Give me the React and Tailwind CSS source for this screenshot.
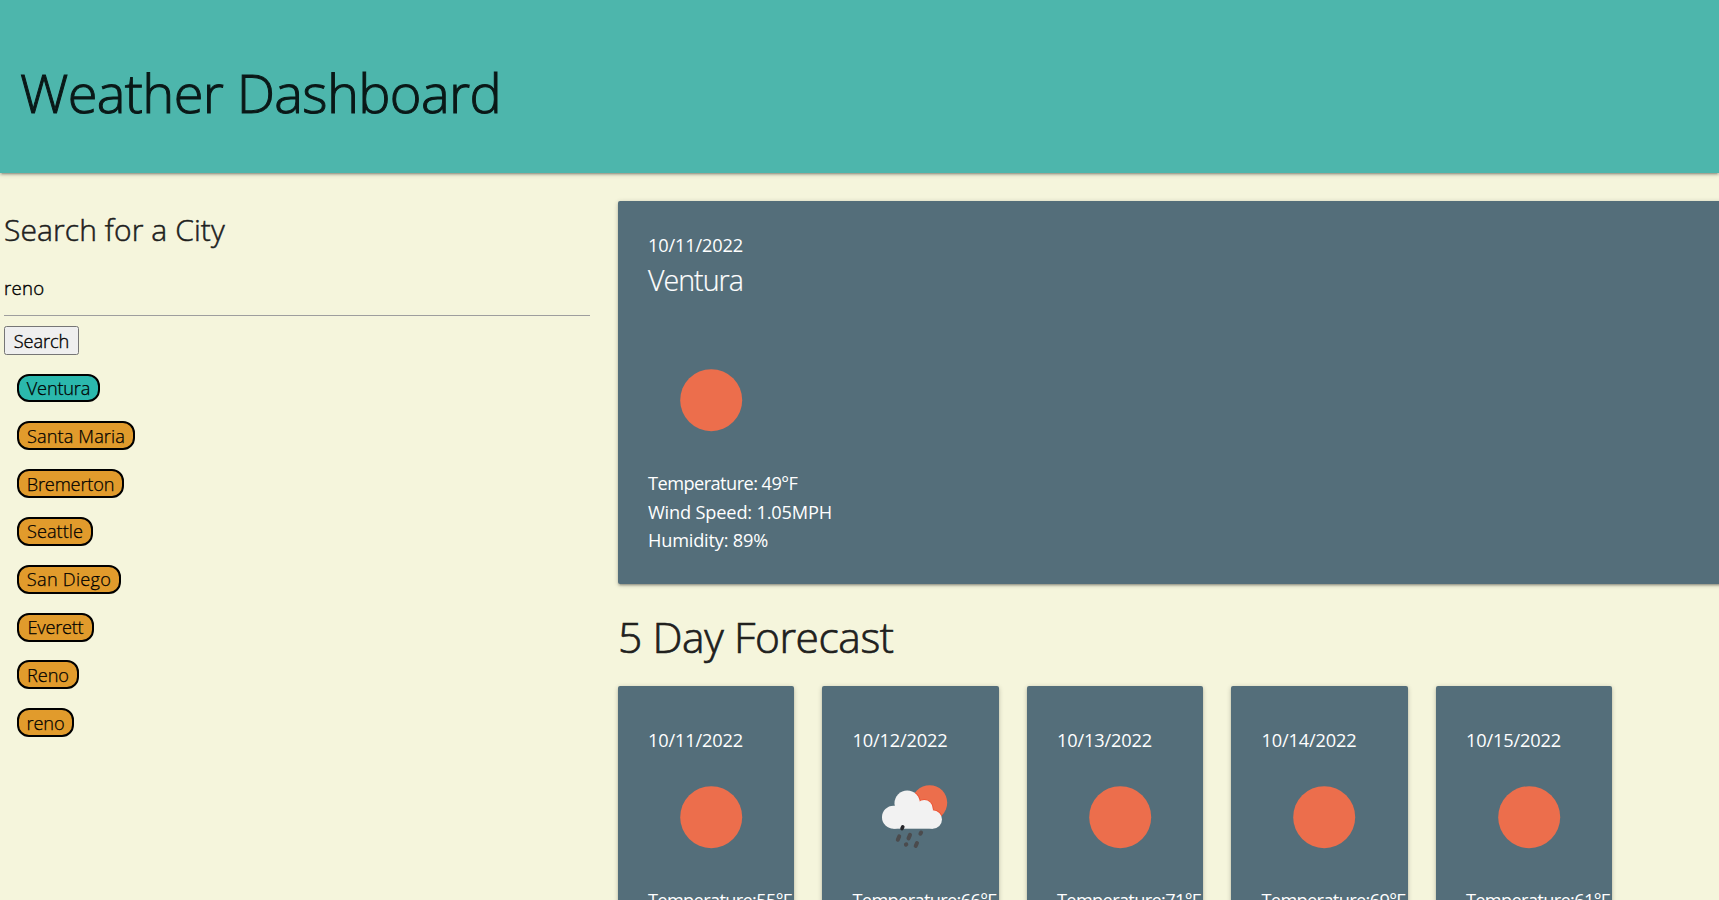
const CITIES = [
  { name: "Ventura", style: "w-[83px] bg-[#2bb8ad] tracking-[-0.2px]" },
  { name: "Santa Maria", style: "w-[118px] bg-[#e19b2c] tracking-[0.1px]" },
  { name: "Bremerton", style: "w-[107px] bg-[#e19b2c] tracking-[-0.15px]" },
  { name: "Seattle", style: "w-[76px] bg-[#e19b2c] tracking-[0px]" },
  { name: "San Diego", style: "w-[104px] bg-[#e19b2c] tracking-[0.25px]" },
  { name: "Everett", style: "w-[77px] bg-[#e19b2c] tracking-[-0.25px]" },
  { name: "Reno", style: "w-[62px] bg-[#e19b2c] tracking-[-0.1px]" },
  { name: "reno", style: "w-[57px] bg-[#e19b2c] tracking-[-0.1px]" },
];

const FORECAST = [
  { date: "10/11/2022", temp: 55 },
  { date: "10/12/2022", temp: 66, rain: true },
  { date: "10/13/2022", temp: 71 },
  { date: "10/14/2022", temp: 69 },
  { date: "10/15/2022", temp: 61 },
];

const CARD =
  "rounded-[2px] bg-[#546e7a] text-white text-[18.2px] leading-[28.6px] shadow-[0_2px_2px_0_rgba(0,0,0,0.14),0_3px_1px_-2px_rgba(0,0,0,0.12),0_1px_5px_0_rgba(0,0,0,0.2)]";

function SunIcon() {
  return (
    <svg className="block size-[126px]" viewBox="0 0 126 126">
      <circle cx="63.2" cy="63.2" r="31" fill="#ec6e4c" />
    </svg>
  );
}

function RainIcon() {
  const cloud = (
    <>
      <circle cx="72.3" cy="54.5" r="8.4" />
      <circle cx="80.8" cy="65.5" r="9.2" />
      <circle cx="55.2" cy="49.2" r="12.7" />
    </>
  );
  return (
    <svg className="block size-[126px]" viewBox="0 0 126 126">
      <defs>
        <clipPath id="sun-disc">
          <circle cx="77.6" cy="48.8" r="17.6" />
        </clipPath>
      </defs>
      <circle cx="77.6" cy="48.8" r="17.6" fill="#ec6e4c" />
      <g clipPath="url(#sun-disc)" fill="none" stroke="#ee5030" strokeWidth="1.8">
        {cloud}
      </g>
      <g fill="#f2f2f2">
        {cloud}
        <circle cx="41.5" cy="63.2" r="11.5" />
        <rect x="41.5" y="55" width="39.3" height="19.7" />
      </g>
      <g stroke="#4b4b4d" strokeWidth="4" strokeLinecap="round">
        <path d="M50.8 72.8L50 74.6" stroke="#26262a" strokeWidth="3.6" />
        <path d="M47.2 82.4L45.8 85.8M58 80.9L56.5 84.4M69.1 78.5L68.4 79.7M53.9 90.6L54.3 90.4M65 89L63.7 92" />
      </g>
    </svg>
  );
}

export default function App() {
  return (
    <div className="flex h-[900px] w-full flex-col overflow-hidden bg-[#f5f5dc] font-['Open_Sans','Noto_Sans',sans-serif] text-black">
      <header className="h-[173px] shrink-0 bg-[#4db6ac] pt-[55px] pl-[20px] shadow-[0_2px_2px_0_rgba(0,0,0,0.14),0_3px_1px_-2px_rgba(0,0,0,0.12),0_1px_5px_0_rgba(0,0,0,0.2)]">
        <h1 className="text-[54.2px] leading-[74px] font-light tracking-[-0.65px] whitespace-nowrap text-[#0a1817] [-webkit-text-stroke:1px_#0a1817]">
          Weather Dashboard
        </h1>
      </header>

      <main className="flex min-h-0 flex-1">
        <aside className="w-[618px] shrink-0 pr-[28px] pl-[4px]">
          <h2 className="pt-[36px] text-[30px] leading-[42px] font-light tracking-[0.1px] text-[#20201d] [-webkit-text-stroke:0.5px_#20201d]">
            Search for a City
          </h2>
          <input
            type="text"
            defaultValue="reno"
            className="mt-[7px] block h-[58px] w-full border-b border-[#9e9e9e] bg-transparent pt-[2px] text-[18.6px] font-light tracking-[0.25px] outline-none [-webkit-text-stroke:0.4px_black]"
          />
          <button className="mt-[10px] flex h-[29px] w-[75px] items-center justify-center rounded-[2.5px] border border-[#767676] bg-[#efefef] pt-[2px] text-[18.2px] leading-none font-light tracking-[-0.1px] [-webkit-text-stroke:0.35px_black]">
            Search
          </button>
          <ul className="mt-[18.5px] ml-[13px] flex flex-col gap-[18.95px]">
            {CITIES.map((c) => (
              <li key={c.name} className="flex h-[28.9px]">
                <button
                  className={`flex h-full items-center justify-center rounded-[12px] border-2 border-black text-[18.2px] leading-none font-light whitespace-nowrap [-webkit-text-stroke:0.25px_black] ${c.style}`}
                >
                  {c.name}
                </button>
              </li>
            ))}
          </ul>
        </aside>

        <section className="w-[1140px] shrink-0 pt-[28px]">
          <article className={`h-[383px] px-[30px] pt-[29.6px] ${CARD}`}>
            <p className="tracking-[-0.15px]">10/11/2022</p>
            <h3 className="pt-px text-[28.6px] leading-[40px] font-light tracking-[-1px] [-webkit-text-stroke:0.2px_white]">
              Ventura
            </h3>
            <div className="pt-[37.2px] pb-[5.6px]">
              <SunIcon />
            </div>
            <p className="tracking-[-0.55px]">Temperature: 49°F</p>
            <p className="tracking-[-0.17px]">Wind Speed: 1.05MPH</p>
            <p className="tracking-[-0.2px]">Humidity: 89%</p>
          </article>

          <h2 className="pt-[23px] text-[42.5px] leading-[60px] font-light tracking-[-0.4px] text-[#20201d] [-webkit-text-stroke:0.7px_#20201d]">
            5 Day Forecast
          </h2>

          <div className="mt-[19px] flex gap-[28.1px]">
            {FORECAST.map((day) => (
              <article key={day.date} className={`h-[320px] w-[176.4px] pt-[39.6px] pl-[30px] ${CARD}`}>
                <p className="tracking-[-0.15px]">{day.date}</p>
                {day.rain ? <RainIcon /> : <SunIcon />}
                <p className="mt-[5.6px] tracking-[-0.65px] whitespace-nowrap">Temperature:{day.temp}°F</p>
              </article>
            ))}
          </div>
        </section>
      </main>
    </div>
  );
}
